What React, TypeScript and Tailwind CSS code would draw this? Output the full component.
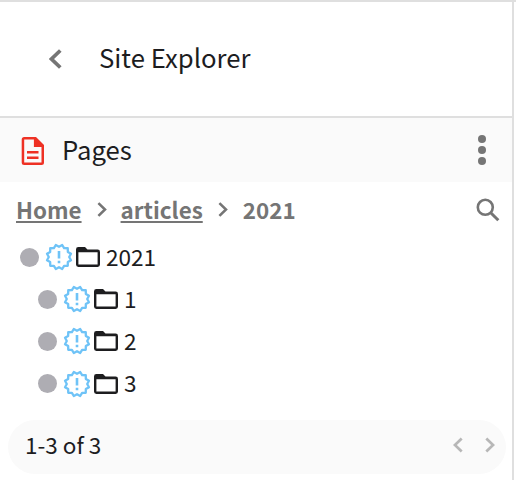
import React from "react";

function Chevron({ className, left = false }: { className: string; left?: boolean }) {
  return (
    <svg viewBox="0 0 13 20" className={className} fill="none" stroke="currentColor">
      <path d={left ? "M11.3 1.5 2.5 10 11.3 18.5" : "M1.7 1.5 10.5 10 1.7 18.5"} />
    </svg>
  );
}

function SealIcon() {
  const points: string[] = [];
  for (let i = 0; i < 24; i++) {
    const radius = i % 2 === 0 ? 12.4 : 10.2;
    const angle = (Math.PI / 12) * i + Math.PI / 12;
    points.push(`${14 + radius * Math.sin(angle)},${14 - radius * Math.cos(angle)}`);
  }
  return (
    <svg viewBox="0 0 28 28" className="ml-1.5 h-7 w-7 shrink-0 text-[#6fc3f7]" fill="none" stroke="currentColor">
      <polygon points={points.join(" ")} strokeWidth="2.3" strokeLinejoin="round" />
      <path d="M14 8v7.4M14 17.8v2.4" strokeWidth="2.6" />
    </svg>
  );
}

function FolderIcon() {
  return (
    <svg viewBox="0 0 24 20" className="ml-[3px] h-5 w-6 shrink-0 text-[#1d1d1f]" fill="currentColor">
      <path fillRule="evenodd" d="M2.4 0H9L11.5 2.5h10.1A2.4 2.4 0 0 1 24 4.9v12.7a2.4 2.4 0 0 1-2.4 2.4H2.4A2.4 2.4 0 0 1 0 17.6V2.4A2.4 2.4 0 0 1 2.4 0ZM2.4 5.2v12.3h19.2V5.2Z" />
    </svg>
  );
}

function TreeRow({ label, nested = false }: { label: string; nested?: boolean }) {
  return (
    <li className={`flex h-[42.2px] items-center ${nested ? "pl-[38px]" : "pl-5"}`}>
      <span className="h-[19px] w-[19px] shrink-0 rounded-full bg-[#aeadb3]" />
      <SealIcon />
      <FolderIcon />
      <span className="ml-1.5 pb-px text-[22.6px] leading-8">{label}</span>
    </li>
  );
}

export default function App() {
  return (
    <div className="h-[480px] w-[516px] overflow-hidden border-t-2 border-[#dfdfdf] bg-white font-['Noto_Sans_CJK_SC',sans-serif] text-[#1d1d1f]">
      <div className="flex h-full w-[514px] flex-col border-r-2 border-[#dfdfdf]">
        <header className="flex h-[116px] shrink-0 items-center border-b-2 border-[#dfdfdf] pl-[49px]">
          <Chevron left className="h-5 w-[13px] stroke-[3.7] text-[#757575]" />
          <h1 className="ml-[37px] pb-1 text-[25.7px] leading-8">Site Explorer</h1>
        </header>
        <section className="flex h-16 shrink-0 items-center bg-[#fafafa] pl-[21px] pr-[26px]">
          <svg viewBox="0 0 24 28" className="mt-[2px] h-7 w-6 text-[#ee3124]" fill="currentColor">
            <path fillRule="evenodd" d="M3.2 0H15L23 8v17.5a2.5 2.5 0 0 1-2.5 2.5H3.2A2.5 2.5 0 0 1 .7 25.5V2.5A2.5 2.5 0 0 1 3.2 0ZM3.2 2.5v23h17.3V10h-7.6V2.5Z" />
            <path d="M6 14h11.5v2.4H6zM6 19.5h11.5v2.4H6z" />
          </svg>
          <h2 className="ml-[17px] pb-[2px] text-[25.7px] leading-8">Pages</h2>
          <div className="ml-auto flex flex-col gap-[3px]">
            <i className="h-2 w-2 rounded-full bg-[#757575]" />
            <i className="h-2 w-2 rounded-full bg-[#757575]" />
            <i className="h-2 w-2 rounded-full bg-[#757575]" />
          </div>
        </section>
        <nav className="flex h-[54px] shrink-0 items-center pl-4 pr-3 text-[22.4px] font-bold leading-8 text-[#757575]">
          <a className="pb-px underline decoration-2 underline-offset-2">Home</a>
          <Chevron className="ml-[15px] mt-px h-[15px] w-[10px] stroke-[3.4]" />
          <a className="ml-[14px] pb-px underline decoration-2 underline-offset-2">articles</a>
          <Chevron className="ml-[15px] mt-px h-[15px] w-[10px] stroke-[3.4]" />
          <span className="ml-[15px] pb-px">2021</span>
          <svg viewBox="0 0 24 24" className="ml-auto mt-px h-6 w-6" fill="none" stroke="currentColor">
            <circle cx="9.3" cy="9.3" r="7.5" strokeWidth="2.6" />
            <path d="m15 15 7.3 7.3" strokeWidth="3" />
          </svg>
        </nav>
        <ul>
          <TreeRow label="2021" />
          <TreeRow label="1" nested />
          <TreeRow label="2" nested />
          <TreeRow label="3" nested />
        </ul>
        <footer className="mb-[6px] ml-2 mr-[6px] mt-auto flex h-[54px] items-center rounded-full bg-[#fafafa] pl-[17px] pr-[11px]">
          <span className="pb-1.5 text-[22.5px] leading-8">1-3 of 3</span>
          <Chevron left className="mb-1 ml-auto h-4 w-[10px] stroke-[3.5] text-[#b7b7b7]" />
          <Chevron className="mb-1 ml-[22px] h-4 w-[10px] stroke-[3.5] text-[#b7b7b7]" />
        </footer>
      </div>
    </div>
  );
}
